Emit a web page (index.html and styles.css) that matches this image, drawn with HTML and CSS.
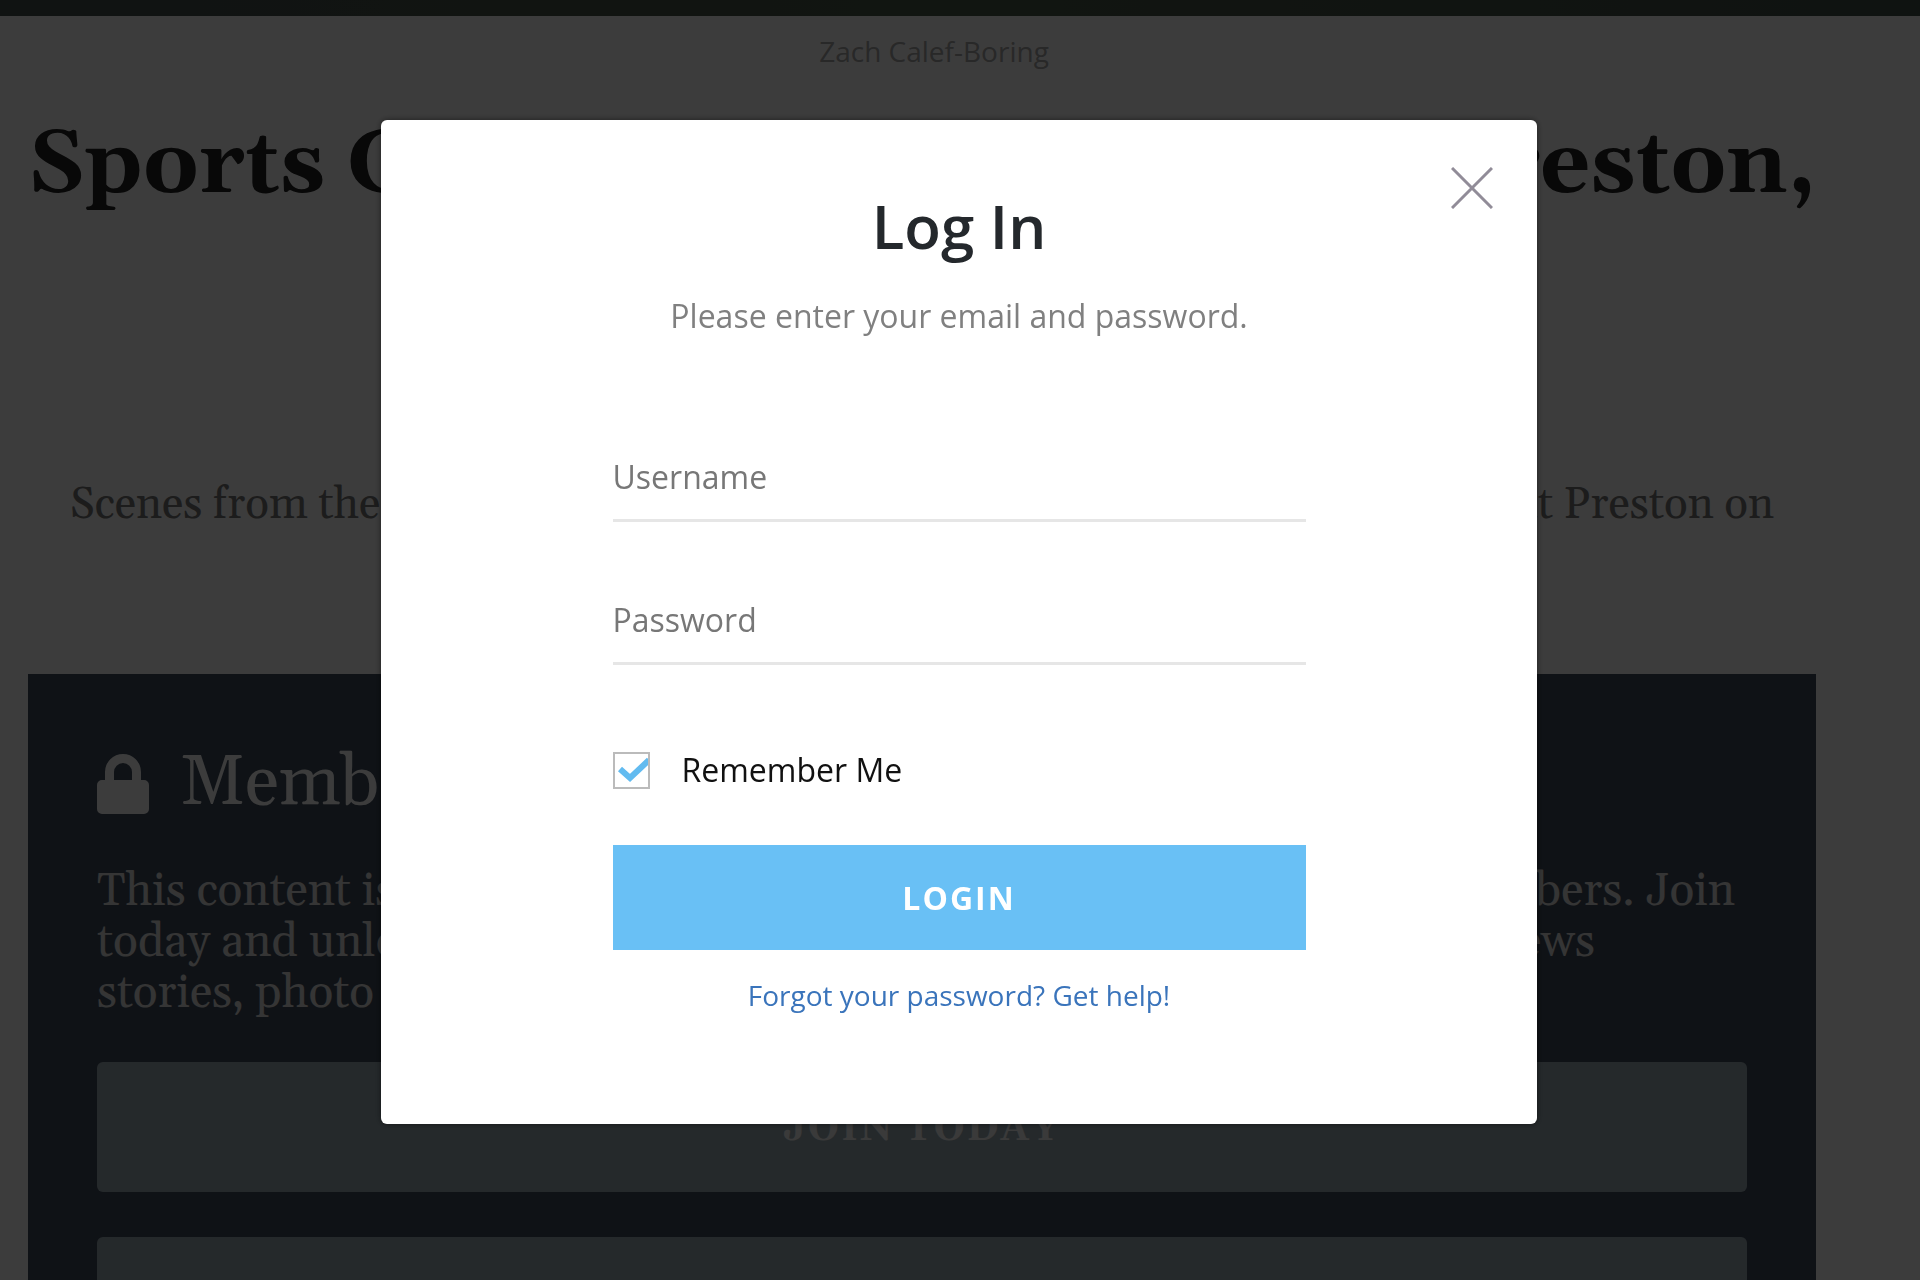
FILE: index.html
```html
<!DOCTYPE html>
<html lang="en">
<head>
  <meta charset="utf-8">
  <meta name="viewport" content="width=device-width, initial-scale=1">
  <title>Log In</title>
  <link rel="stylesheet" href="styles.css">
</head>
<body>
  <div class="photo-strip"></div>
  <main class="article">
    <p class="byline">Zach Calef-Boring</p>
    <h1 class="headline"><span>Sports Gallery</span><span>Preston,</span></h1>
    <p class="summary"><span>Scenes from the</span><span>at Preston on</span></p>
    <section class="members">
      <h2 class="members-title">
        <svg class="lock" viewBox="0 0 52 60" aria-hidden="true">
          <path fill-rule="evenodd" d="M8 26V18a18 18 0 0 1 36 0v8h3a5 5 0 0 1 5 5v24a5 5 0 0 1-5 5H5a5 5 0 0 1-5-5V31a5 5 0 0 1 5-5zM17 26h18v-8a9 9 0 0 0-18 0z"/>
        </svg>
        Members
      </h2>
      <div class="members-text">
        <p class="line"><span>This content is</span><span>members. Join</span></p>
        <p class="line line-short"><span>today and unlock</span><span>news</span></p>
        <p class="line"><span>stories, photo</span></p>
      </div>
      <div class="members-actions">
        <button class="members-button" type="button">JOIN TODAY</button>
        <button class="members-button" type="button" aria-label="Log in"></button>
      </div>
    </section>
  </main>

  <div class="overlay">
    <div class="modal" role="dialog" aria-modal="true" aria-labelledby="login-title">
      <button class="close" type="button" aria-label="Close">
        <svg viewBox="0 0 42 42" aria-hidden="true"><path d="M1 1l40 40M41 1L1 41"/></svg>
      </button>
      <h2 class="modal-title" id="login-title">Log In</h2>
      <p class="modal-intro">Please enter your email and password.</p>
      <form class="form">
        <input class="field" type="text" placeholder="Username" aria-label="Username">
        <input class="field" type="password" placeholder="Password" aria-label="Password">
        <div class="remember">
          <input class="checkbox" type="checkbox" id="remember" checked>
          <label for="remember">Remember Me</label>
        </div>
        <button class="submit" type="submit">LOGIN</button>
        <a class="help" href="#">Forgot your password? Get help!</a>
      </form>
    </div>
  </div>
</body>
</html>
```
FILE: styles.css
```css
* {
  box-sizing: border-box;
  margin: 0;
}

body {
  height: 100vh;
  overflow: hidden;
  background: #fff;
  font-family: "Open Sans", sans-serif;
}

.photo-strip {
  height: 16px;
  background: linear-gradient(90deg, #46504e, #4b5a48 50%, #42504a);
}

.article {
  padding: 15px 104px 0 28px;
  font-family: Georgia, Gelasio, "DejaVu Serif", serif;
}

.byline {
  padding-left: 24px;
  color: #aaa;
  font: 28px/40px "Open Sans", sans-serif;
  text-align: center;
}

.headline {
  display: flex;
  justify-content: space-between;
  height: 244px;
  margin-top: 45px;
  color: #222;
  font-size: 88px;
  line-height: 100px;
}

.summary {
  display: flex;
  justify-content: space-between;
  margin-top: 120px;
  padding: 0 42px;
  color: #777;
  font-size: 44px;
  line-height: 50px;
}

.members {
  margin-top: 144px;
  padding: 69px;
  background: #404d5e;
}

.members-title {
  display: flex;
  align-items: center;
  gap: 31px;
  color: #fff;
  font-size: 70px;
  font-weight: 400;
  line-height: 82px;
}

.lock {
  width: 52px;
  height: 60px;
  fill: #fff;
}

.members-text {
  margin-top: 41px;
  padding-right: 12px;
  color: #e0e0e0;
  font-size: 46px;
  line-height: 51px;
}

.line {
  display: flex;
  justify-content: space-between;
}

.line-short {
  padding-right: 140px;
}

.members-actions {
  display: grid;
  gap: 45px;
  margin-top: 43px;
}

.members-button {
  height: 130px;
  padding: 4px 0 0;
  border: 0;
  border-radius: 6px;
  background: #9daeb7;
  color: #f4f4f4;
  font: bold 38px Georgia, Gelasio, "DejaVu Serif", serif;
  letter-spacing: 2px;
}

.overlay {
  position: fixed;
  inset: 0;
  display: flex;
  justify-content: center;
  align-items: flex-start;
  padding: 120px 26px 0 24px;
  background: rgba(0, 0, 0, 0.765);
}

.modal {
  position: relative;
  width: 1156px;
  max-width: 100%;
  padding: 66px 24px 109px;
  border-radius: 6px;
  background: #fff;
  box-shadow: 0 0 6px rgba(0, 0, 0, 0.5);
  text-align: center;
}

.close {
  position: absolute;
  top: 47px;
  right: 44px;
  width: 42px;
  height: 42px;
  padding: 0;
  border: 0;
  background: none;
}

.close svg {
  display: block;
  fill: none;
  stroke: #918c98;
  stroke-width: 3;
}

.modal-title {
  color: #24282c;
  font-size: 60px;
  font-weight: 600;
  line-height: 80px;
}

.modal-intro {
  margin-top: 28px;
  color: #808080;
  font-size: 32px;
  line-height: 44px;
}

.form {
  display: flex;
  flex-direction: column;
  max-width: 693px;
  margin: 118px auto 0;
}

.field {
  height: 66px;
  margin-bottom: 77px;
  padding: 0 0 22px;
  border: 0;
  border-bottom: 3px solid #e6e6e6;
  background: none;
  color: #222;
  font: 32px/44px "Open Sans", sans-serif;
}

.field::placeholder {
  color: #777;
  opacity: 1;
}

.remember {
  display: flex;
  align-items: center;
  gap: 32px;
  margin-top: 6px;
  color: #111;
  font-size: 32px;
  line-height: 44px;
}

.checkbox {
  appearance: none;
  width: 37px;
  height: 37px;
  margin: 0;
  border: 2px solid #bbb;
  background: url("data:image/svg+xml,%3Csvg xmlns='http://www.w3.org/2000/svg' viewBox='0 0 37 37'%3E%3Cpath d='M7 17l10 9L36 8' fill='none' stroke='%2362bbf0' stroke-width='6'/%3E%3C/svg%3E") border-box center / 100% no-repeat;
}

.submit {
  height: 105px;
  margin-top: 53px;
  border: 0;
  background: #69c0f5;
  color: #fff;
  font: 700 32px "Open Sans", sans-serif;
  letter-spacing: 2px;
}

.help {
  align-self: center;
  margin-top: 25px;
  color: #3a74bb;
  font-size: 28px;
  line-height: 40px;
  text-decoration: none;
}
```
